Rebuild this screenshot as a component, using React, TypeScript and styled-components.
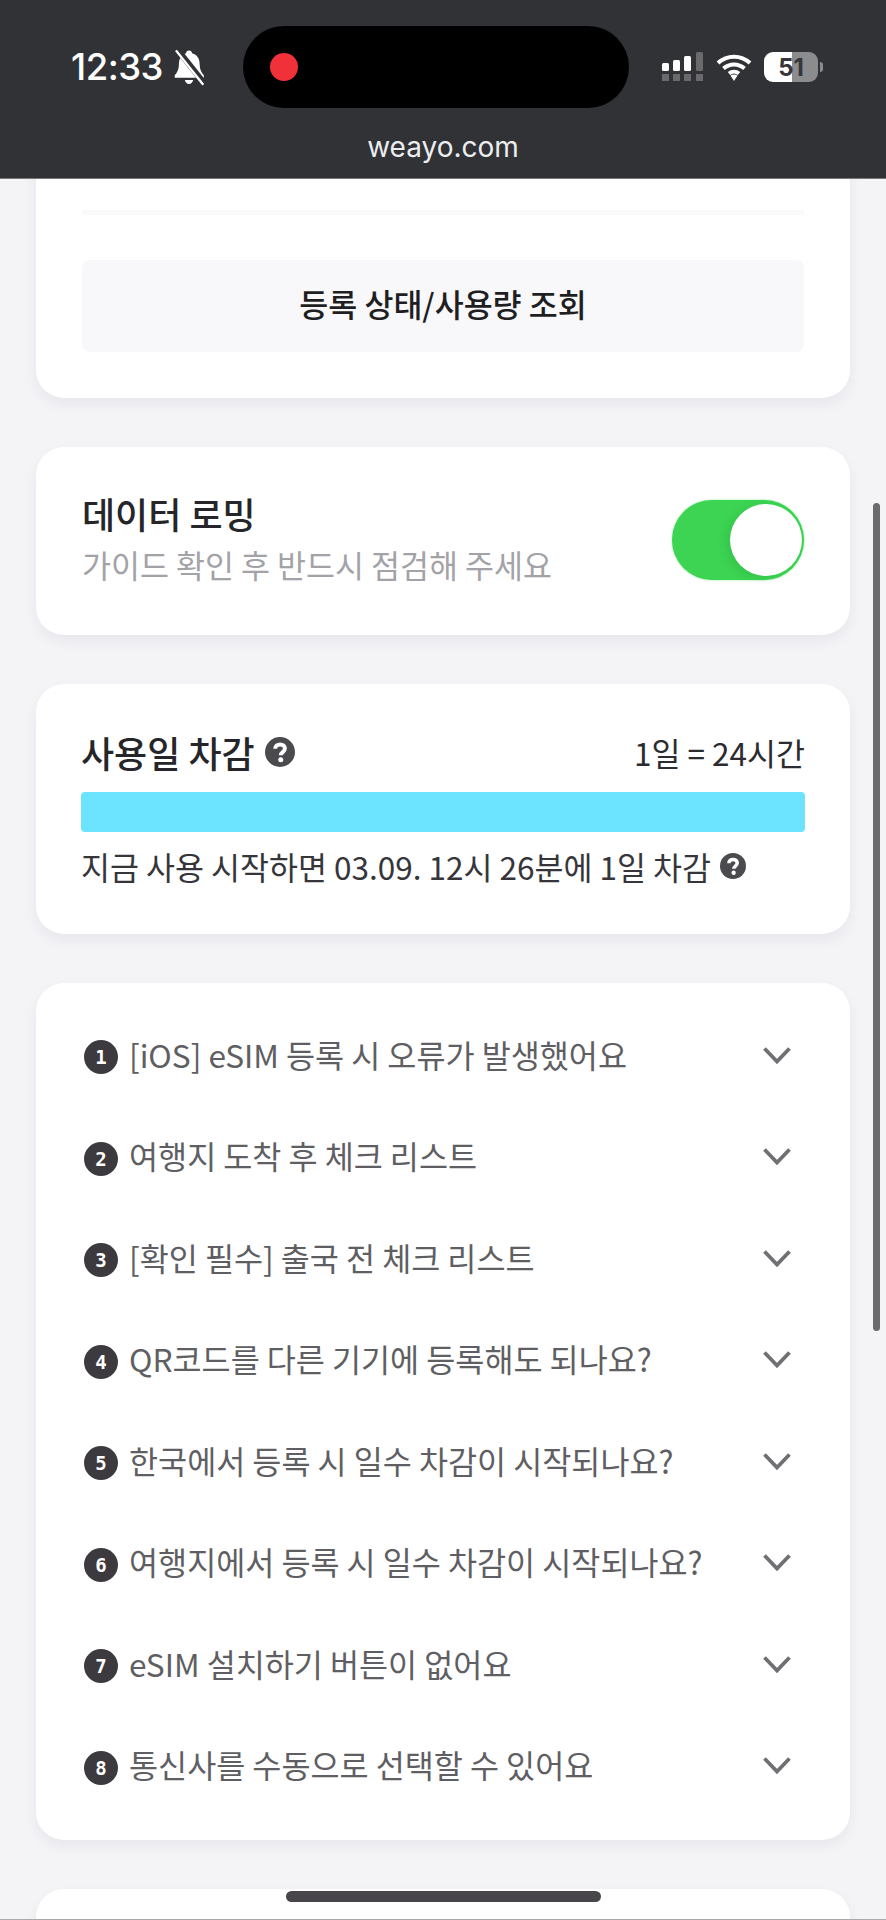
import React from "react";
import styled, { createGlobalStyle } from "styled-components";

const Global = createGlobalStyle`
  html, body { margin: 0; padding: 0; background: #f4f3f6; }
  body { width: 886px; height: 1920px; overflow: hidden; font-family: "Noto Sans CJK KR", "Noto Sans", sans-serif; }
`;

const Screen = styled.div`
  position: relative;
  width: 886px;
  height: 1920px;
  overflow: hidden;
  background: #f4f3f6;
  border-bottom: 1px solid #a9a9ab;
  box-sizing: border-box;
`;

const Header = styled.header`
  height: 179px;
  box-sizing: border-box;
  background: #313236;
  border-bottom: 1px solid #77787a;
  padding: 26px 0 0 71px;
  position: relative;
  z-index: 2;
`;

const StatusRow = styled.div`
  display: flex;
  align-items: flex-start;
`;

const Clock = styled.div`
  width: 92px;
  height: 82px;
  display: flex;
  align-items: center;
  font-family: Inter, sans-serif;
  font-weight: 500;
  font-size: 36.5px;
  letter-spacing: -0.5px;
  color: #fff;
  white-space: nowrap;
`;

const BellSlot = styled.div`
  width: 41px;
  height: 82px;
  margin-left: 7px;
  display: flex;
  align-items: center;
`;

const Island = styled.div`
  width: 386px;
  height: 82px;
  margin-left: 32px;
  border-radius: 41px;
  background: #000;
  display: flex;
  align-items: center;
  padding-left: 27px;
  box-sizing: border-box;
`;

const RecDot = styled.span`
  width: 28px;
  height: 28px;
  border-radius: 50%;
  background: #f0313a;
`;

const Indicators = styled.div`
  margin-left: 33px;
  height: 82px;
  display: flex;
  align-items: center;
`;

const Battery = styled.div`
  width: 54px;
  height: 30px;
  margin-left: 12px;
  border-radius: 9px;
  overflow: hidden;
  background: linear-gradient(to right, #fff 0 52%, #8c8c8e 52% 100%);
  display: flex;
  align-items: center;
  justify-content: center;
  font-family: Inter, sans-serif;
  font-weight: 700;
  font-size: 24px;
  color: #36363a;
`;

const Nub = styled.span`
  width: 3px;
  height: 10px;
  margin-left: 2px;
  border-radius: 0 3px 3px 0;
  background: #8c8c8e;
`;

const Url = styled.div`
  margin-top: 21px;
  margin-left: -71px;
  text-align: center;
  font-family: Inter, sans-serif;
  font-size: 28px;
  line-height: 36px;
  color: #ecedee;
`;

const Content = styled.main`
  margin-top: -41px;
  padding: 0 36px;
  display: flex;
  flex-direction: column;
  gap: 49px;
`;

const Card = styled.section`
  background: #fff;
  border-radius: 28px;
  box-shadow: 0 6px 14px rgba(40, 30, 60, 0.06);
`;

const LookupCard = styled(Card)`
  height: 260px;
  box-sizing: border-box;
  padding: 72px 46px 0;
`;

const Rule = styled.div`
  height: 5px;
  background: #fafafb;
`;

const LookupButton = styled.div`
  height: 92px;
  margin-top: 45px;
  border-radius: 8px;
  background: #f8f7fa;
  display: flex;
  align-items: center;
  justify-content: center;
  padding-bottom: 6px;
  box-sizing: border-box;
  font-size: 31.5px;
  font-weight: 500;
  color: #1f1f23;
`;

const RoamingCard = styled(Card)`
  height: 188px;
  box-sizing: border-box;
  padding: 38px 46px 0 46px;
  display: flex;
  justify-content: space-between;
  align-items: flex-start;
`;

const RoamingTitle = styled.div`
  font-size: 36px;
  line-height: 56px;
  font-weight: 500;
  color: #26262a;
`;

const RoamingHint = styled.div`
  font-size: 31.5px;
  line-height: 46px;
  color: #a2a2a7;
`;

const Toggle = styled.div`
  width: 132px;
  height: 80px;
  margin-top: 15px;
  border-radius: 40px;
  background: #3cd452;
  box-shadow: 0 0 2px #6fe883;
  display: flex;
  align-items: center;
  justify-content: flex-end;
  padding-right: 2px;
  box-sizing: border-box;
`;

const Knob = styled.span`
  width: 72px;
  height: 72px;
  border-radius: 50%;
  background: #fff;
  box-shadow: -4px 2px 8px rgba(30, 120, 50, 0.18);
`;

const UsageCard = styled(Card)`
  height: 250px;
  box-sizing: border-box;
  padding: 43px 45px 0 45px;
`;

const UsageHead = styled.div`
  display: flex;
  align-items: center;
  justify-content: space-between;
  height: 50px;
`;

const UsageTitle = styled.div`
  display: flex;
  align-items: center;
  gap: 10px;
  font-size: 36px;
  font-weight: 500;
  color: #26262a;
`;

const UsageRatio = styled.div`
  font-size: 31.5px;
  color: #2c2c30;
`;

const Bar = styled.div`
  height: 40px;
  margin-top: 15px;
  border-radius: 4px;
  background: #6de4ff;
`;

const UsageNote = styled.div`
  margin-top: 11px;
  display: flex;
  align-items: center;
  gap: 9px;
  font-size: 31.5px;
  line-height: 46px;
  color: #36363a;
`;

const FaqCard = styled(Card)`
  height: 857px;
  box-sizing: border-box;
  padding: 20px 0 0 48px;
`;

const FaqRow = styled.div`
  height: 101.5px;
  display: flex;
  align-items: center;
`;

const NumBadge = styled.span`
  width: 34px;
  height: 34px;
  flex: none;
  margin-top: 7px;
  border-radius: 50%;
  background: #3c3a3e;
  color: #fff;
  display: flex;
  align-items: center;
  justify-content: center;
  font-family: "DejaVu Sans Mono", monospace;
  font-weight: 700;
  font-size: 19px;
`;

const FaqText = styled.span`
  flex: 1;
  margin-left: 11px;
  font-size: 31.6px;
  color: #5e5e63;
  white-space: nowrap;
`;

const Chevron = styled.svg`
  width: 30px;
  height: 18px;
  flex: none;
  margin: 2px 58px 0 0;
`;

const NextCard = styled(Card)`
  height: 60px;
`;

const ScrollThumb = styled.div`
  position: absolute;
  left: 873px;
  top: 503px;
  width: 7px;
  height: 828px;
  border-radius: 4px;
  background: #6b6b6f;
`;

const HomeBar = styled.div`
  position: absolute;
  left: 286px;
  top: 1891px;
  width: 315px;
  height: 11px;
  border-radius: 6px;
  background: #48464a;
`;

const Help = ({ size }: { size: number }) => (
  <svg width={size} height={size} viewBox="0 0 24 24">
    <circle cx="12" cy="12" r="12" fill="#4b4a4e" />
    <path d="M8.2 9.4c0-2.2 1.7-3.5 3.900-3.5s3.800 1.300 3.800 3.300c0 2.900-3.200 2.800-3.200 5.300" fill="none" stroke="#fff" strokeWidth="3.200" />
    <circle cx="12.600" cy="18.200" r="2" fill="#fff" />
  </svg>
);

const questions = [
  "[iOS] eSIM 등록 시 오류가 발생했어요",
  "여행지 도착 후 체크 리스트",
  "[확인 필수] 출국 전 체크 리스트",
  "QR코드를 다른 기기에 등록해도 되나요?",
  "한국에서 등록 시 일수 차감이 시작되나요?",
  "여행지에서 등록 시 일수 차감이 시작되나요?",
  "eSIM 설치하기 버튼이 없어요",
  "통신사를 수동으로 선택할 수 있어요",
];

export default function App() {
  return (
    <Screen>
      <Global />
      <Header>
        <StatusRow>
          <Clock>12:33</Clock>
          <BellSlot>
            <svg width="38" height="38" viewBox="0 0 32 32">
              <path d="M16 2c1.500 0 2.500 1 2.600 2.400C23 5.600 25 9 25 14c0 4 1.500 6.500 3.500 9v2H4v-2c2-2.500 3.500-5 3.500-9 0-5 2-8.400 6-9.600C13.600 3 14.500 2 16 2zM12.500 27h7c-.3 2-1.700 3.300-3.500 3.300s-3.200-1.300-3.500-3.300z" fill="#fff" />
              <path d="M6 1l23 29" stroke="#313236" strokeWidth="5" />
              <path d="M5 2l23 29" stroke="#fff" strokeWidth="2" />
            </svg>
          </BellSlot>
          <Island><RecDot /></Island>
          <Indicators>
            <svg width="42" height="30" viewBox="0 0 42 30">
              <rect x="0" y="11" width="7" height="8" rx="1.500" fill="#fff" />
              <rect x="11" y="8" width="7" height="11" rx="1.500" fill="#fff" />
              <rect x="22" y="4" width="7" height="15" rx="1.500" fill="#fff" />
              <rect x="34" y="0" width="7" height="19" rx="1.500" fill="#6a6a6d" />
              <rect x="0" y="22" width="7" height="7" fill="#6a6a6d" />
              <rect x="11" y="22" width="7" height="7" fill="#6a6a6d" />
              <rect x="22" y="22" width="7" height="7" fill="#6a6a6d" />
              <rect x="34" y="22" width="7" height="7" fill="#6a6a6d" />
            </svg>
            <svg width="36" height="28" viewBox="0 0 36 28" style={{ marginLeft: 12 }}>
              <path d="M2 10c9-8.500 23-8.500 32 0M7.500 15.500c6-5.500 15-5.500 21 0M13 20.500c3-2.500 7-2.500 10 0" fill="none" stroke="#fff" strokeWidth="4" />
              <path d="M14.500 22.500c2-1.300 5-1.300 7 0L18 28z" fill="#fff" />
            </svg>
            <Battery>51</Battery>
            <Nub />
          </Indicators>
        </StatusRow>
        <Url>weayo.com</Url>
      </Header>

      <Content>
        <LookupCard>
          <Rule />
          <LookupButton>등록 상태/사용량 조회</LookupButton>
        </LookupCard>

        <RoamingCard>
          <div>
            <RoamingTitle>데이터 로밍</RoamingTitle>
            <RoamingHint>가이드 확인 후 반드시 점검해 주세요</RoamingHint>
          </div>
          <Toggle><Knob /></Toggle>
        </RoamingCard>

        <UsageCard>
          <UsageHead>
            <UsageTitle>사용일 차감 <Help size={30} /></UsageTitle>
            <UsageRatio>1일 = 24시간</UsageRatio>
          </UsageHead>
          <Bar />
          <UsageNote>지금 사용 시작하면 03.09. 12시 26분에 1일 차감 <Help size={26} /></UsageNote>
        </UsageCard>

        <FaqCard>
          {questions.map((q, i) => (
            <FaqRow key={q}>
              <NumBadge>{i + 1}</NumBadge>
              <FaqText>{q}</FaqText>
              <Chevron viewBox="0 0 30 18">
                <path d="M2.500 2.500L15 15.500 27.500 2.500" fill="none" stroke="#707074" strokeWidth="3.800" />
              </Chevron>
            </FaqRow>
          ))}
        </FaqCard>

        <NextCard />
      </Content>

      <ScrollThumb />
      <HomeBar />
    </Screen>
  );
}
